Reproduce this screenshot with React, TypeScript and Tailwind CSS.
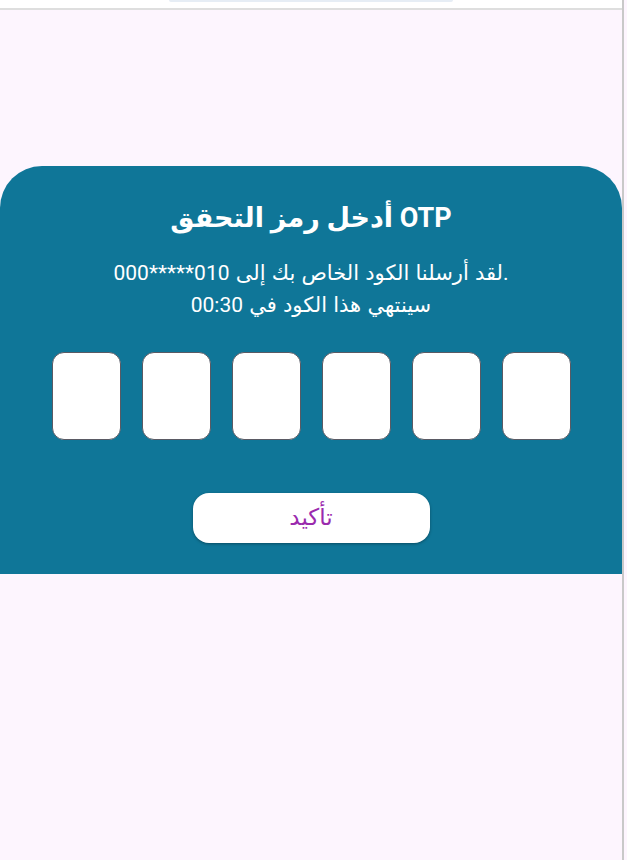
import React from 'react';

const OtpPage = () => {
  const boxes = [0, 1, 2, 3, 4, 5];

  return (
    <div className="flex h-[860px] w-full bg-[#fdf5fe]" style={{ fontFamily: 'Roboto, "Noto Sans", "DejaVu Sans", sans-serif' }}>
      <div className="flex w-[624px] flex-col border-r-2 border-[#c9c9c9]">
        {/* top bar */}
        <div className="flex h-[10px] justify-center border-b-2 border-[#dedede] bg-white">
          <div className="h-[2px] w-[284px] rounded-b-md bg-[#e6edf5]" />
        </div>

        <div className="h-[156px]" />

        {/* otp panel */}
        <div className="flex flex-col items-center rounded-t-[42px] bg-[#0f7698] pt-[33px] pb-[31px] text-white">
          <h1 className="text-[27px] font-bold leading-[38px]">أدخل رمز التحقق OTP</h1>

          <p className="mt-[20px] text-center text-[21px] leading-[32px] [word-spacing:1px]">
            لقد أرسلنا الكود الخاص بك إلى 010*****000.
            <br />
            سينتهي هذا الكود في 00:30
          </p>

          <div className="mt-[31px] flex gap-[21px]">
            {boxes.map((b) => (
              <input
                key={b}
                type="text"
                maxLength={1}
                className="h-[88px] w-[69px] rounded-[12px] border border-[#5a5a64] bg-white text-center text-2xl text-black outline-none"
              />
            ))}
          </div>

          <button
            type="button"
            className="mt-[53px] h-[50px] w-[237px] rounded-[16px] bg-white text-[23px] text-[#9a2aae] shadow-[0_1px_3px_rgba(0,0,0,0.35)]"
          >
            تأكيد
          </button>
        </div>
      </div>
    </div>
  );
};

export default function App() {
  return <OtpPage />;
}
